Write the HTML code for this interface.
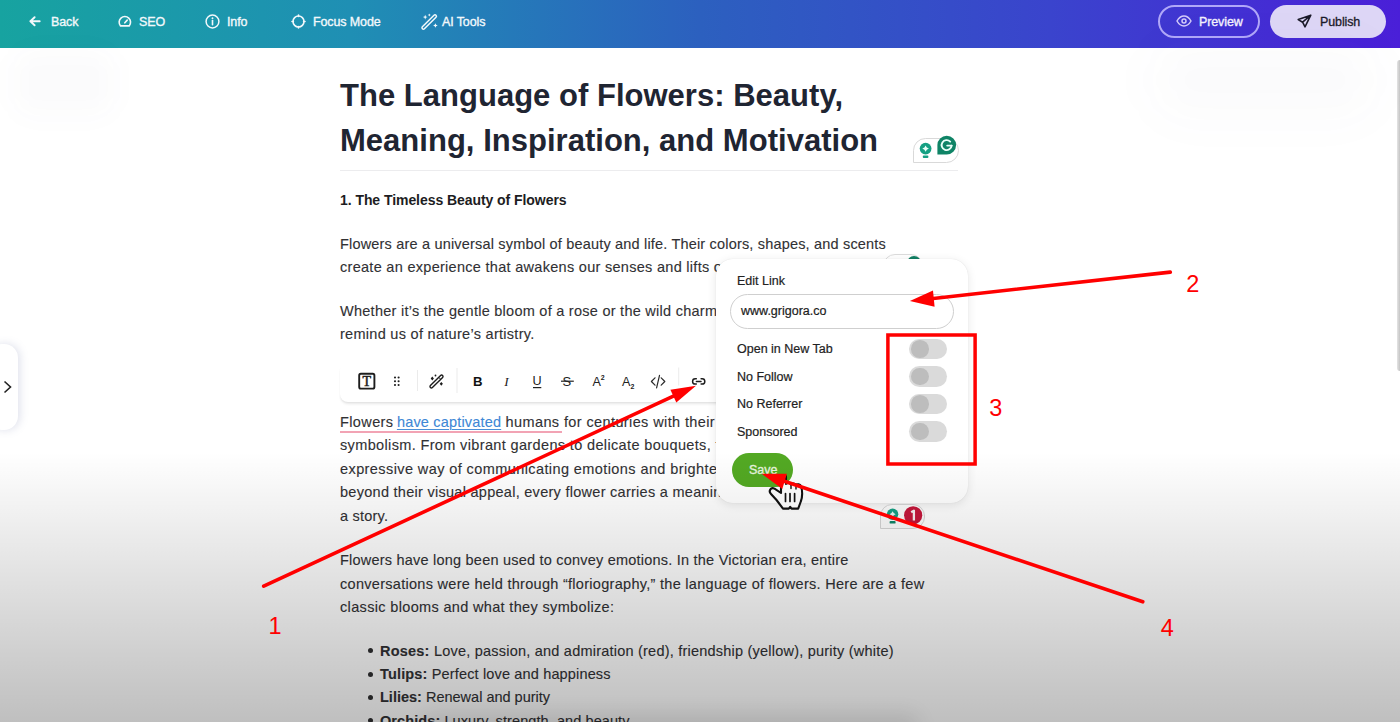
<!DOCTYPE html>
<html><head><meta charset="utf-8">
<style>
*{margin:0;padding:0;box-sizing:border-box}
html,body{width:1400px;height:722px;overflow:hidden;background:#fff;font-family:"Liberation Sans",sans-serif}
.abs{position:absolute;white-space:nowrap}
#hdr{position:absolute;left:0;top:0;width:1400px;height:48px;background:linear-gradient(90deg,#17a3a0 0%,#1f8fb4 25%,#2c60bf 50%,#3a44cd 75%,#4a1fd8 100%)}
.nav{position:absolute;top:0;height:44px;line-height:44px;color:#f2f8fb;font-weight:normal;font-size:12.5px;letter-spacing:-0.12px;-webkit-text-stroke:0.35px #f2f8fb}
.nav svg{position:absolute}
.p{position:absolute;white-space:nowrap;font-size:14.5px;color:#313134;-webkit-text-stroke:0.12px #313134}
.pop{font-size:12.5px;color:#222;-webkit-text-stroke:0.2px #222}
.p{line-height:24px}
.tg{position:absolute;left:909px;width:38px;height:20.5px;border-radius:10.5px;background:#dadada}
.tg::after{content:"";position:absolute;left:2px;top:1.5px;width:17.5px;height:17.5px;border-radius:50%;background:#bdbdbd}
</style></head><body>
<div id="hdr">
  <!-- Back -->
  <svg class="abs" style="left:29px;top:16px" width="12" height="11" viewBox="0 0 12 11"><path d="M10.7 5.25H1.5M5.6 1.2L1.4 5.25L5.6 9.3" fill="none" stroke="#f2f8fb" stroke-width="1.9" stroke-linecap="round" stroke-linejoin="round"/></svg>
  <div class="nav" style="left:51px">Back</div>
  <!-- SEO -->
  <svg class="abs" style="left:117px;top:15px" width="16" height="13" viewBox="0 0 16 13"><path d="M3.5 10.9A5.7 5.7 0 1 1 12.2 10.9Z" fill="none" stroke="#f2f8fb" stroke-width="1.6" stroke-linejoin="round"/><path d="M7.85 7.8L10.2 5.1" stroke="#f2f8fb" stroke-width="1.6" stroke-linecap="round"/></svg>
  <div class="nav" style="left:139px">SEO</div>
  <!-- Info -->
  <svg class="abs" style="left:205px;top:14px" width="15" height="15" viewBox="0 0 15 15"><circle cx="7.5" cy="7.5" r="6.4" fill="none" stroke="#f2f8fb" stroke-width="1.5"/><path d="M7.5 6.6V10.8" stroke="#f2f8fb" stroke-width="1.6" stroke-linecap="round"/><circle cx="7.5" cy="4.3" r="0.95" fill="#f2f8fb"/></svg>
  <div class="nav" style="left:227px">Info</div>
  <!-- Focus -->
  <svg class="abs" style="left:291px;top:14px" width="15" height="15" viewBox="0 0 15 15"><circle cx="7.5" cy="7.5" r="5.5" fill="none" stroke="#f2f8fb" stroke-width="1.6"/><path d="M7.5 1V2.4M7.5 12.6V14M1 7.5H2.4M12.6 7.5H14" stroke="#f2f8fb" stroke-width="1.6" stroke-linecap="round"/></svg>
  <div class="nav" style="left:313px">Focus Mode</div>
  <!-- AI tools -->
  <svg class="abs" style="left:421px;top:12.5px" width="18" height="18" viewBox="0 0 18 18"><path d="M2.6 16.4L14.2 4.8A1.4 1.4 0 0 0 12.2 2.8L0.6 14.4A1.4 1.4 0 0 0 2.6 16.4Z" fill="none" stroke="#f2f8fb" stroke-width="1.5" transform="translate(0.8 -0.6)"/><path d="M4.2 1.8L4.9 3.4L6.5 4.1L4.9 4.8L4.2 6.4L3.5 4.8L1.9 4.1L3.5 3.4Z M14.4 10.2L15.1 11.8L16.7 12.5L15.1 13.2L14.4 14.8L13.7 13.2L12.1 12.5L13.7 11.8Z M8.3 0.6L8.8 1.6L9.8 2.1L8.8 2.6L8.3 3.6L7.8 2.6L6.8 2.1L7.8 1.6Z" fill="#f2f8fb"/></svg>
  <div class="nav" style="left:442px">AI Tools</div>
  <!-- Preview -->
  <div class="abs" style="left:1158px;top:5px;width:102px;height:33px;border:2px solid rgba(196,188,255,0.85);border-radius:17px"></div>
  <svg class="abs" style="left:1176px;top:15px" width="16" height="12" viewBox="0 0 16 12"><path d="M1 6C3 2.5 5.3 1 8 1S13 2.5 15 6C13 9.5 10.7 11 8 11S3 9.5 1 6Z" fill="none" stroke="#d4ccfa" stroke-width="1.5"/><circle cx="8" cy="6" r="2" fill="none" stroke="#d4ccfa" stroke-width="1.5"/></svg>
  <div class="nav" style="left:1199px;color:#f4f2fd;-webkit-text-stroke:0.35px #f4f2fd">Preview</div>
  <!-- Publish -->
  <div class="abs" style="left:1270px;top:5px;width:116px;height:33px;background:#ddd6f6;border-radius:17px"></div>
  <svg class="abs" style="left:1297px;top:14px" width="15" height="14" viewBox="0 0 15 14"><path d="M13.8 1.2L1.2 5.6L5.6 8.2L8 12.8L13.8 1.2Z M13.8 1.2L5.6 8.2" fill="none" stroke="#1c1b2a" stroke-width="1.6" stroke-linejoin="round"/></svg>
  <div class="nav" style="left:1320px;color:#1c1b2a;-webkit-text-stroke:0.3px #1c1b2a">Publish</div>
</div>

<!-- right edge line -->
<div class="abs" style="left:1397px;top:60px;width:3px;height:311px;border-radius:3px 0 0 3px;background:linear-gradient(90deg,#e4e4e4,#c4c4c4)"></div>

<!-- left tab -->
<div class="abs" style="left:-12px;top:344px;width:30px;height:86px;background:#fff;border-radius:14px;box-shadow:2px 0 9px rgba(110,120,170,0.22)"></div>
<svg class="abs" style="left:3px;top:380px" width="10" height="14" viewBox="0 0 10 14"><path d="M1.5 1.5L7.5 7L1.5 12.5" fill="none" stroke="#222" stroke-width="1.6"/></svg>

<!-- Title -->
<div class="abs" style="left:340px;top:72.8px;font-size:31px;line-height:45px;font-weight:bold;color:#1f2532;letter-spacing:0.02px">The Language of Flowers: Beauty,<br>Meaning, Inspiration, and Motivation</div>

<!-- content placeholder -->

<!-- title separator -->
<div class="abs" style="left:340px;top:170px;width:618px;height:1px;background:#ececee"></div>
<!-- grammarly top -->
<div class="abs" style="left:913px;top:137.5px;width:46px;height:25.5px;border:1.2px solid #d9d9d9;border-radius:12.5px 12.5px 12.5px 0;background:#fff"></div>
<svg class="abs" style="left:900px;top:130px" width="70" height="40" viewBox="900 130 70 40">
 <circle cx="925.6" cy="148.6" r="5.9" fill="#15a083"/><rect x="922.8" y="155.6" width="5.6" height="2.4" rx="0.9" fill="#15a083"/>
 <path d="M925.6 145.4L926.8 147.5L928.9 148.6L926.8 149.7L925.6 151.8L924.4 149.7L922.3 148.6L924.4 147.5Z" fill="#eafff8"/>
 <path d="M937.4 145.1A9.35 9.35 0 0 1 956.1 145.1A9.35 9.35 0 0 1 946.75 154.45H937.4Z" fill="#0f8466"/>
 <path d="M951.6 145.6A5 5 0 1 1 950.2 141.6" fill="none" stroke="#eafff8" stroke-width="1.9" stroke-linecap="round"/><path d="M947.2 145.6H951.6" stroke="#eafff8" stroke-width="1.9" stroke-linecap="round"/>
</svg>

<!-- heading -->
<div class="abs" style="left:340px;top:187.6px;font-size:14px;line-height:24px;font-weight:bold;color:#1d1d22;letter-spacing:-0.06px">1. The Timeless Beauty of Flowers</div>
<div class="p" style="left:340px;top:231.6px;letter-spacing:0.182px">Flowers are a universal symbol of beauty and life. Their colors, shapes, and scents</div>
<div class="p" style="left:340px;top:254.8px;letter-spacing:0.290px">create an experience that awakens our senses and lifts our spirits.</div>
<div class="p" style="left:340px;top:299.0px;letter-spacing:0.260px">Whether it’s the gentle bloom of a rose or the wild charm of a wildflower, flowers</div>
<div class="p" style="left:340px;top:322.4px;letter-spacing:0.289px">remind us of nature’s artistry.</div>
<div class="p" style="left:340px;top:409.8px;letter-spacing:0.388px">Flowers <span style="color:#4088d6;-webkit-text-stroke:0.12px #4088d6;text-decoration:underline;text-decoration-color:#4a8fd8;text-decoration-thickness:1.2px;text-underline-offset:2px;margin-left:-1px;letter-spacing:0.18px">have captivated</span> humans for centuries with their</div>
<div class="p" style="left:340px;top:433.2px;letter-spacing:0.357px">symbolism. From vibrant gardens to delicate bouquets, flowers offer an</div>
<div class="p" style="left:340px;top:456.7px;letter-spacing:0.408px">expressive way of communicating emotions and brightening our days.</div>
<div class="p" style="left:340px;top:480.2px;letter-spacing:0.276px">beyond their visual appeal, every flower carries a meaning that tells</div>
<div class="p" style="left:340px;top:504.0px;letter-spacing:0.220px">a story.</div>
<div class="p" style="left:340px;top:548.1px;letter-spacing:0.216px">Flowers have long been used to convey emotions. In the Victorian era, entire</div>
<div class="p" style="left:340px;top:571.6px;letter-spacing:0.291px">conversations were held through “floriography,” the language of flowers. Here are a few</div>
<div class="p" style="left:340px;top:595.3px;letter-spacing:0.340px">classic blooms and what they symbolize:</div>
<div class="p" style="left:380px;top:638.8px;letter-spacing:0.220px"><b>Roses:</b> Love, passion, and admiration (red), friendship (yellow), purity (white)</div>
<div class="abs" style="left:367.5px;top:648.3px;width:5px;height:5px;border-radius:50%;background:#2e2e30"></div>
<div class="p" style="left:380px;top:662.1px;letter-spacing:0.155px"><b>Tulips:</b> Perfect love and happiness</div>
<div class="abs" style="left:367.5px;top:671.6px;width:5px;height:5px;border-radius:50%;background:#2e2e30"></div>
<div class="p" style="left:380px;top:685.4px;letter-spacing:-0.001px"><b>Lilies:</b> Renewal and purity</div>
<div class="abs" style="left:367.5px;top:694.9px;width:5px;height:5px;border-radius:50%;background:#2e2e30"></div>
<div class="p" style="left:380px;top:708.8px;letter-spacing:0.086px"><b>Orchids:</b> Luxury, strength, and beauty</div>
<div class="abs" style="left:367.5px;top:718.3px;width:5px;height:5px;border-radius:50%;background:#2e2e30"></div>

<!-- link + underline in P3 -->
<div class="abs" style="left:340px;top:430.8px;width:222px;height:2px;background:#f2a3b4"></div>

<!-- grammarly peek under popup -->
<div class="abs" style="left:882.5px;top:254px;width:40px;height:24px;border:1.2px solid #dcdcdc;border-radius:12px;background:#fff"></div>
<div class="abs" style="left:906.5px;top:256px;width:14px;height:14px;border-radius:50%;background:#117f63"></div>

<!-- toolbar -->
<div class="abs" style="left:340px;top:362px;width:392px;height:40px;background:#fff;border-radius:8px;box-shadow:0 3px 3px -1px rgba(0,0,0,0.09),-1px 2px 2px -1px rgba(0,0,0,0.04)"></div>
<svg class="abs" style="left:340px;top:362px" width="380" height="40" viewBox="340 362 380 40">
 <rect x="359.2" y="373.8" width="15.2" height="14.8" rx="1.6" fill="none" stroke="#1d1d1d" stroke-width="1.9"/>
 <text x="366.8" y="386.3" font-family="Liberation Serif" font-size="14" text-anchor="middle" fill="#1d1d1d" stroke="#1d1d1d" stroke-width="0.5">T</text>
 <g fill="#1d1d1d"><circle cx="395" cy="377.5" r="1.05"/><circle cx="398.6" cy="377.5" r="1.05"/><circle cx="395" cy="381.25" r="1.05"/><circle cx="398.6" cy="381.25" r="1.05"/><circle cx="395" cy="385" r="1.05"/><circle cx="398.6" cy="385" r="1.05"/></g>
 <rect x="417" y="370" width="1" height="21" fill="#ebebeb"/>
 <path d="M432.4 387.6L442.6 377.4A1.4 1.4 0 0 0 440.6 375.4L430.4 385.6A1.4 1.4 0 0 0 432.4 387.6Z" fill="none" stroke="#1d1d1d" stroke-width="1.4"/>
 <path d="M440.4 379L438.6 377.2" stroke="#1d1d1d" stroke-width="1"/>
 <path d="M432.3 376.6L433.9 378.5L432.3 380.4L430.7 378.5Z M441.3 381.9L442.9 383.8L441.3 385.7L439.7 383.8Z" fill="#1d1d1d"/>
 <circle cx="435.5" cy="375.5" r="0.9" fill="#1d1d1d"/>
 <rect x="456.5" y="368" width="1" height="25" fill="#ebebeb"/>
 <text x="473" y="386.1" font-family="Liberation Sans" font-weight="bold" font-size="13.2" fill="#111">B</text>
 <text x="504.2" y="386.1" font-family="Liberation Serif" font-style="italic" font-size="13.2" fill="#222">I</text>
 <text x="532.6" y="385.3" font-family="Liberation Sans" font-size="12.6" fill="#222">U</text>
 <rect x="533" y="387" width="8.3" height="1.2" fill="#222"/>
 <text x="562.6" y="386.3" font-family="Liberation Sans" font-size="13" fill="#222">S</text>
 <rect x="561" y="380.6" width="12.8" height="1.2" fill="#222"/>
 <text x="592.6" y="385.6" font-family="Liberation Sans" font-size="12.6" fill="#222">A</text>
 <text x="600.8" y="379.8" font-family="Liberation Sans" font-weight="bold" font-size="7" fill="#222">2</text>
 <text x="622" y="385.6" font-family="Liberation Sans" font-size="12.6" fill="#222">A</text>
 <text x="630.4" y="388.6" font-family="Liberation Sans" font-weight="bold" font-size="7" fill="#222">2</text>
 <path d="M655 377.8L651.4 381.5L655 385.2M661.2 377.8L664.8 381.5L661.2 385.2M659.5 375.4L656.6 387.8" fill="none" stroke="#2a2a2a" stroke-width="1.2" stroke-linecap="round" stroke-linejoin="round"/>
 <rect x="678.2" y="367.5" width="1" height="18" fill="#ebebeb"/>
 <path d="M696.3 378.8H695.2A2.6 2.6 0 0 0 695.2 384H696.3M701.1 378.8H702.2A2.6 2.6 0 0 1 702.2 384H701.1M696.4 381.4H701" fill="none" stroke="#1d1d1d" stroke-width="1.5" stroke-linecap="round"/>
</svg>

<!-- popup -->
<div class="abs" style="left:716px;top:258.5px;width:252px;height:244.5px;background:#fff;border-radius:17px;box-shadow:0 2px 10px rgba(0,0,0,0.10),0 0 1px rgba(0,0,0,0.12)"></div>
<div class="abs pop" style="left:737px;top:272px;line-height:18px">Edit Link</div>
<div class="abs" style="left:730px;top:293.5px;width:223.5px;height:35px;border:1.5px solid #cfcfcf;border-radius:18px;background:#fff"></div>
<div class="abs pop" style="left:741px;top:302px;line-height:18px;color:#1a1a1a">www.grigora.co</div>
<div class="abs pop" style="left:737px;top:340px;line-height:18px">Open in New Tab</div>
<div class="abs pop" style="left:737px;top:367.5px;line-height:18px">No Follow</div>
<div class="abs pop" style="left:737px;top:395px;line-height:18px">No Referrer</div>
<div class="abs pop" style="left:737px;top:422.5px;line-height:18px">Sponsored</div>
<div class="tg" style="top:338.8px"></div><div class="tg" style="top:366px"></div><div class="tg" style="top:393.6px"></div><div class="tg" style="top:421px"></div>
<div class="abs" style="left:732.3px;top:453px;width:60.5px;height:34px;border-radius:17px;background:#53a923"></div>
<div class="abs" style="left:749px;top:461px;line-height:18px;font-size:12.5px;color:#e6f4de;-webkit-text-stroke:0.35px #e6f4de">Save</div>

<!-- grammarly bottom -->
<div class="abs" style="left:880px;top:504.2px;width:45px;height:24.5px;border:1.2px solid #d4d4d4;border-radius:12px 12px 12px 0;background:#fafafa"></div>
<svg class="abs" style="left:870px;top:495px" width="70" height="40" viewBox="870 495 70 40">
 <circle cx="892.6" cy="514.2" r="5.7" fill="#15a083"/><rect x="889.6" y="521" width="6" height="2.6" rx="0.9" fill="#0f8466"/><path d="M892.6 511.2L893.7 513.1L895.6 514.2L893.7 515.3L892.6 517.2L891.5 515.3L889.6 514.2L891.5 513.1Z" fill="#e6f7f2"/>
 <circle cx="913.15" cy="515.3" r="9.1" fill="#c4163a"/>
 <path d="M911.2 512.3L913.9 510.6V520.5" fill="none" stroke="#f8eef0" stroke-width="2.3" stroke-linejoin="round"/>
</svg>

<!-- cursor hand -->
<svg class="abs" style="left:760px;top:465px" width="50" height="50" viewBox="760 465 50 50">
 <path d="M781 477C781 474.5 786 474.5 786 477L786 484C787 482.5 790.5 482.5 791 484.5C792 483 795.5 483 796 485C797 483.8 800.5 484 801 486.5C802.6 490 802.6 497 800.8 501.5L798.2 508.6H791.5L790.2 506.8L788.8 508.6H783L776.5 500L771 494C768.2 491.3 770.6 486.8 774.5 488.6L781 493Z" fill="#fff" stroke="#111" stroke-width="2.1" stroke-linejoin="round"/>
 <path d="M785.5 493.5V501.5M790 493.5V501.5M794.6 493.5V501.5" stroke="#111" stroke-width="1.7" stroke-linecap="round"/>
 <path d="M791 484.8V488.5M796 485.2V489" stroke="#111" stroke-width="1.4" stroke-linecap="round"/>
</svg>

<!-- faint blobs -->
<div class="abs" style="left:14px;top:50px;width:100px;height:66px;border-radius:20px;background:rgba(40,40,110,0.02);filter:blur(12px)"></div>
<div class="abs" style="left:1150px;top:40px;width:230px;height:80px;border-radius:40px;background:rgba(40,40,110,0.018);filter:blur(22px)"></div>
<!-- bottom gradient overlay -->
<div class="abs" style="left:0;top:452px;width:1400px;height:270px;background:linear-gradient(to bottom,rgba(0,0,0,0) 0%,rgba(0,0,0,0.25) 100%)"></div>

<div class="abs" style="left:420px;top:713px;width:500px;height:30px;background:rgba(0,0,0,0.08);filter:blur(9px);border-radius:15px"></div>
<!-- annotations -->
<svg class="abs" style="left:0;top:0" width="1400" height="722" viewBox="0 0 1400 722">
 <g stroke="#ff0000" stroke-width="3.6" stroke-linecap="round" fill="none">
  <line x1="263.7" y1="586.2" x2="675" y2="395.4"/>
  <line x1="1170.3" y1="272.1" x2="931" y2="298.7"/>
  <line x1="1142.8" y1="601.8" x2="783" y2="480.8"/>
 </g>
 <g fill="#ff0000">
  <path d="M696 385.7L676.3 402.6L670.4 389.8Z"/>
  <path d="M909.9 301.1L933 290.5L934.6 306.7Z"/>
  <path d="M761.7 473.7L786.9 473.7L782.3 488.9Z"/>
 </g>
 <rect x="887.9" y="335" width="87.2" height="129" fill="none" stroke="#ff0000" stroke-width="3.5"/>
 <g font-family="Liberation Sans" font-size="23.5" fill="#ff0000">
  <text x="268.5" y="633.6">1</text>
  <text x="1186.2" y="292">2</text>
  <text x="989.3" y="415.6">3</text>
  <text x="1160.8" y="635.5">4</text>
 </g>
</svg>


</body></html>
